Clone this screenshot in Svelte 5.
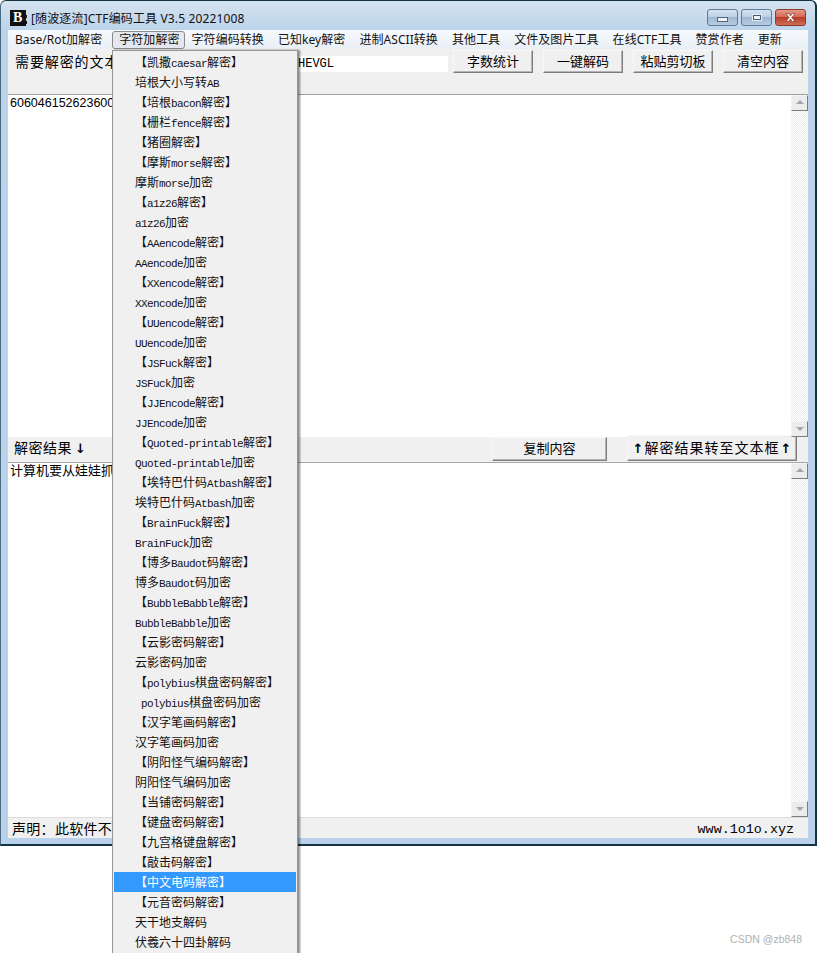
<script>
  const menubar = [
    "Base/Rot加解密", "字符加解密", "字符编码转换", "已知key解密", "进制ASCII转换",
    "其他工具", "文件及图片工具", "在线CTF工具", "赞赏作者", "更新"
  ];

  const items = [
    "【凯撒caesar解密】", "培根大小写转AB", "【培根bacon解密】", "【栅栏fence解密】", "【猪圈解密】",
    "【摩斯morse解密】", "摩斯morse加密", "【a1z26解密】", "a1z26加密", "【AAencode解密】",
    "AAencode加密", "【XXencode解密】", "XXencode加密", "【UUencode解密】", "UUencode加密",
    "【JSFuck解密】", "JSFuck加密", "【JJEncode解密】", "JJEncode加密", "【Quoted-printable解密】",
    "Quoted-printable加密", "【埃特巴什码Atbash解密】", "埃特巴什码Atbash加密", "【BrainFuck解密】", "BrainFuck加密",
    "【博多Baudot码解密】", "博多Baudot码加密", "【BubbleBabble解密】", "BubbleBabble加密", "【云影密码解密】",
    "云影密码加密", "【polybius棋盘密码解密】", " polybius棋盘密码加密", "【汉字笔画码解密】", "汉字笔画码加密",
    "【阴阳怪气编码解密】", "阴阳怪气编码加密", "【当铺密码解密】", "【键盘密码解密】", "【九宫格键盘解密】",
    "【敲击码解密】", "【中文电码解密】", "【元音密码解密】", "天干地支解码", "伏羲六十四卦解码"
  ];

  // latin runs use a narrower face than the CJK text, like the old bitmap font
  function runs(label) {
    return label.match(/[ -~]+|[^ -~]+/g).map((text) => ({ text, latin: /^[ -~]/.test(text) }));
  }
</script>

<div class="page">
  <div class="window">
    <div class="titlebar">
      <span class="logo">B<i></i><i></i></span>
      <span class="title">[随波逐流]CTF编码工具 V3.5 20221008</span>
      <div class="caption_buttons">
        <button class="cap"><span class="min_glyph"></span></button>
        <button class="cap"><span class="max_glyph"></span></button>
        <button class="cap close"><svg width="13" height="9" viewBox="0 0 13 9"><path d="M2 .5h2.6L6.5 3 8.4.5H11L7.900 4.500 11 8.500H8.400L6.500 6 4.600 8.500H2L5.100 4.500z" fill="#fff" stroke="#7a2a20" stroke-width=".6"/></svg></button>
      </div>
    </div>

    <div class="client">
      <nav class="menubar">
        {#each menubar as name, i}
          <span class="menu_name" class:open={i === 1}>{name}</span>
        {/each}
      </nav>

      <div class="toolbar">
        <span class="label">需要解密的文本</span>
        <input class="key" value="HEVGL" readonly />
        <button class="btn first">字数统计</button>
        <button class="btn">一键解码</button>
        <button class="btn">粘贴剪切板</button>
        <button class="btn">清空内容</button>
      </div>

      <div class="pane source">
        <div class="pane_text digits">606046152623600</div>
        <div class="scrollbar">
          <span class="arrow up"></span>
          <span class="track"></span>
          <span class="arrow down"></span>
        </div>
      </div>

      <div class="midbar">
        <span class="result_label">解密结果<span class="glyph down_glyph">↓</span></span>
        <button class="btn copy">复制内容</button>
        <button class="btn move"><span class="glyph">↑</span>解密结果转至文本框<span class="glyph">↑</span></button>
      </div>

      <div class="pane result">
        <div class="pane_text cjk">计算机要从娃娃抓</div>
        <div class="scrollbar">
          <span class="arrow up"></span>
          <span class="track"></span>
          <span class="arrow down"></span>
        </div>
      </div>

      <div class="statusbar">
        <span class="notice">声明：此软件不</span>
        <span class="site">www.1o1o.xyz</span>
      </div>
    </div>
  </div>

  <div class="dropdown">
    {#each items as item, i}
      <div class="item" class:active={i === 41}>
        {#each runs(item) as run}
          <span class:latin={run.latin}>{run.text}</span>
        {/each}
      </div>
    {/each}
  </div>

  <span class="watermark">CSDN @zb848</span>
</div>

<style>
  :global(body) {
    margin: 0;
    background: #fff;
  }
  .page {
    position: relative;
    width: 817px;
    height: 953px;
    overflow: hidden;
    font-family: "Liberation Sans", "Noto Sans CJK SC", sans-serif;
    color: #000;
  }
  button {
    font-family: inherit;
    padding: 0;
    color: #000;
  }

  .window {
    width: 817px;
    height: 846px;
    box-sizing: border-box;
    padding: 0 7px 6px 7px;
    border: 1px solid #12333f;
    border-left-color: #4a6a80;
    border-bottom-width: 2px;
    border-right-width: 2px;
    border-radius: 6px 6px 0 0;
    background: linear-gradient(#d5e3f0 0, #bcd3ea 30px, #b9d1ea 100%);
    display: flex;
    flex-direction: column;
  }
  .titlebar {
    height: 29px;
    flex: none;
    display: flex;
    align-items: center;
    margin-left: 2px;
    padding-top: 5px;
    box-sizing: border-box;
  }
  .logo {
    position: relative;
    width: 16px;
    height: 16px;
    background: #111;
    color: #fff;
    font: bold 14px/16px "Liberation Serif", serif;
    text-indent: 3px;
    flex: none;
  }
  .logo i {
    position: absolute;
    right: -1px;
    width: 3px;
    height: 3px;
    background: #111;
  }
  .logo i:first-of-type { top: 5px; }
  .logo i:last-of-type { top: 11px; }
  .title {
    margin-left: 5px;
    font-family: "Noto Sans", "Noto Sans CJK SC", sans-serif;
    font-size: 12px;
    letter-spacing: .14px;
    color: #111;
    white-space: nowrap;
  }
  .caption_buttons {
    margin-left: auto;
    margin-right: 2px;
    margin-top: -1px;
    display: flex;
    gap: 3px;
  }
  .cap {
    width: 31px;
    height: 17px;
    border: 1px solid #5d7a99;
    border-radius: 3px;
    background: linear-gradient(#d6e3f0, #bccfe3 45%, #9fb8d2 50%, #b6cce2);
    display: flex;
    align-items: center;
    justify-content: center;
  }
  .min_glyph {
    width: 9px;
    height: 3px;
    margin-top: 4px;
    background: #eef3f8;
    border: 1px solid #52667e;
  }
  .max_glyph {
    width: 6px;
    height: 3px;
    background: #eef3f8;
    border: 1.500px solid #4a5a70;
    outline: 1px solid #e4ecf4;
  }
  .close {
    border-color: #8c3a2e;
    background: linear-gradient(#e49a8a, #d46a58 45%, #b93c28 50%, #cf6e58);
  }

  .client {
    flex: 1;
    min-height: 0;
    display: flex;
    flex-direction: column;
    background: #f0f0f0;
  }
  .menubar {
    height: 19px;
    flex: none;
    display: flex;
    align-items: center;
    background: linear-gradient(#f7fafd, #e9eff6);
    font-family: "Noto Sans", "Noto Sans CJK SC", sans-serif;
    font-size: 12px;
    letter-spacing: .06px;
    color: #111;
  }
  .menu_name {
    padding: 0 7px;
    height: 16px;
    line-height: 16px;
    white-space: nowrap;
  }
  .menu_name:first-child {
    padding-right: 10px;
  }
  .menu_name.open {
    padding: 0 4px 0 6px;
    border: 1px solid #8a8a8a;
    border-radius: 3px;
    background: #e4e8ee;
  }

  .toolbar {
    height: 45px;
    flex: none;
    box-sizing: border-box;
    padding: 1px 5px 0 0;
    display: flex;
    align-items: flex-start;
  }
  .label {
    flex: 1;
    margin: 3px 0 0 7px;
    font-size: 14px;
    line-height: 18px;
    letter-spacing: .9px;
    white-space: nowrap;
  }
  .key {
    width: 150px;
    height: 16px;
    box-sizing: border-box;
    margin: 6px 5px 0 0;
    padding: 0;
    border: 0;
    outline: 0;
    background: #fff;
    font: 12px/16px "Liberation Mono", monospace;
  }
  .btn {
    width: 80px;
    height: 23px;
    box-sizing: border-box;
    padding-bottom: 2px;
    border: 1px solid;
    border-color: #f8f8f8 #7d7d7d #7d7d7d #f8f8f8;
    box-shadow: inset -1px -1px 0 #b4b4b4;
    background: #f0f0f0;
    font-size: 13px;
    margin-left: 10px;
  }
  .btn.first {
    margin-left: 0;
  }

  .pane {
    flex: none;
    display: flex;
    background: #fff;
    border-top: 1px solid #a0a0a0;
    box-sizing: border-box;
  }
  .source { height: 343px; }
  .result { height: 355px; border-top-color: #a8a8a8; }
  .pane_text {
    flex: 1;
    padding-left: 2px;
    font-size: 13px;
    line-height: 15px;
    overflow: hidden;
    white-space: nowrap;
  }
  .digits {
    padding-top: 1px;
    font-size: 12.500px;
  }
  .scrollbar {
    width: 17px;
    flex: none;
    display: flex;
    flex-direction: column;
  }
  .track {
    flex: 1;
    background: repeating-conic-gradient(#ececec 0 25%, #fff 0 50%) 0 0 / 2px 2px;
  }
  .arrow {
    height: 16px;
    flex: none;
    box-sizing: border-box;
    border: 1px solid;
    border-color: #f4f4f4 #7d7d7d #7d7d7d #f4f4f4;
    background: #ececec;
    position: relative;
  }
  .arrow::after {
    content: "";
    position: absolute;
    left: 4px;
    width: 0;
    height: 0;
    border-left: 4px solid transparent;
    border-right: 4px solid transparent;
  }
  .up::after {
    top: 4px;
    border-bottom: 4px solid #a0a6ae;
  }
  .down::after {
    top: 5px;
    border-top: 4px solid #a0a6ae;
  }

  .midbar {
    height: 25px;
    flex: none;
    display: flex;
    align-items: flex-start;
  }
  .result_label {
    margin: 2px 0 0 6px;
    font-size: 14px;
    line-height: 18px;
    letter-spacing: .500px;
    flex: 1;
  }
  .glyph {
    font-family: "DejaVu Sans", sans-serif;
    font-weight: bold;
    font-size: 13px;
    letter-spacing: 0;
    margin: 0 1px;
  }
  .down_glyph {
    margin-left: 3px;
  }
  .btn.copy {
    width: 115px;
    height: 24px;
    margin: 0;
    padding-bottom: 4px;
  }
  .btn.move {
    width: 170px;
    height: 26px;
    margin: -2px 11px 0 20px;
    padding-bottom: 3px;
    font-size: 14px;
    letter-spacing: 1px;
    white-space: nowrap;
  }

  .statusbar {
    flex: 1;
    display: flex;
    justify-content: space-between;
    align-items: center;
    padding: 0 14px 0 4px;
    border-top: 1px solid #dcdcdc;
  }
  .notice {
    font-size: 14px;
    letter-spacing: .3px;
  }
  .site {
    margin-top: 2px;
    font: 13.400px "Liberation Mono", monospace;
  }

  .dropdown {
    position: absolute;
    left: 112px;
    top: 50px;
    width: 186px;
    box-sizing: border-box;
    padding: 1px;
    background: #f0f0f0;
    border: 1px solid #979797;
    box-shadow: 2px 0 2px rgba(0, 0, 0, .45);
    display: flex;
    flex-direction: column;
  }
  .item {
    height: 20px;
    flex: none;
    padding-left: 21px;
    font-size: 12px;
    line-height: 22px;
    white-space: pre;
    color: #111;
  }
  .item.active {
    background: #3399ff;
    color: #fff;
  }
  .latin {
    font-family: "Liberation Mono", monospace;
    font-size: 11px;
    letter-spacing: -.600px;
  }
  .watermark {
    position: absolute;
    right: 15px;
    top: 932px;
    font-size: 10.500px;
    line-height: 14px;
    color: #b0b0b0;
  }
</style>
